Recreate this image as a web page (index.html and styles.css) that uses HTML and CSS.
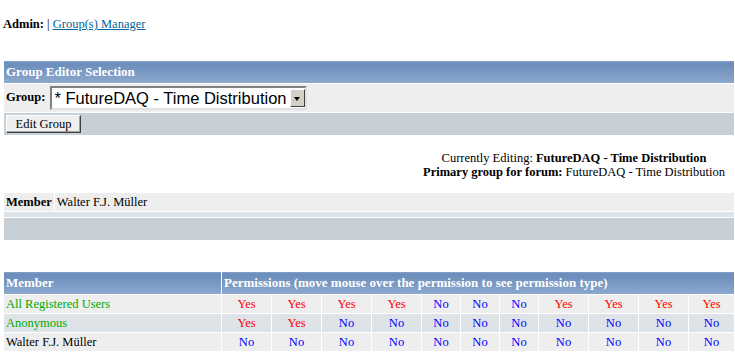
FILE: index.html
```html
<!DOCTYPE html>
<html lang="en">
<head>
  <meta charset="UTF-8"/>
  <title>Group(s) Manager</title>
  <link rel="stylesheet" href="styles.css">
</head>
<body>
  <div class="nav"><b>Admin:</b> | <a href="#">Group(s) Manager</a></div>

  <table class="grid editor">
    <tr><th class="head">Group Editor Selection</th></tr>
    <tr class="row1">
      <td class="pick">
        <b>Group:</b>
        <span class="select">
          <select>
            <option>* FutureDAQ - Time Distribution</option>
          </select>
          <span class="arrow"></span>
        </span>
      </td>
    </tr>
    <tr class="cat"><td class="actions"><button>Edit Group</button></td></tr>
  </table>

  <div class="current-wrap">
    <div class="current">
      Currently Editing: <b>FutureDAQ - Time Distribution</b><br>
      <b>Primary group for forum:</b> FutureDAQ - Time Distribution
    </div>
  </div>

  <table class="grid members">
    <tr class="row1">
      <td class="label"><b>Member</b></td>
      <td>Walter F.J. Müller</td>
    </tr>
    <tr class="row2 thin"><td colspan="2"></td></tr>
    <tr class="cat tall"><td colspan="2"></td></tr>
  </table>

  <table class="grid perms">
    <colgroup>
      <col class="c-member">
      <col class="c-yes"><col class="c-yes"><col class="c-yes"><col class="c-yes">
      <col class="c-no"><col class="c-no"><col class="c-no">
      <col class="c-yes"><col class="c-yes"><col class="c-yes"><col>
    </colgroup>
    <tr>
      <th class="head">Member</th>
      <th class="head" colspan="11">Permissions (move mouse over the permission to see permission type)</th>
    </tr>
    <tr class="row1">
      <td class="group">All Registered Users</td>
      <td class="yes">Yes</td><td class="yes">Yes</td><td class="yes">Yes</td><td class="yes">Yes</td>
      <td class="no">No</td><td class="no">No</td><td class="no">No</td>
      <td class="yes">Yes</td><td class="yes">Yes</td><td class="yes">Yes</td><td class="yes">Yes</td>
    </tr>
    <tr class="row2">
      <td class="group">Anonymous</td>
      <td class="yes">Yes</td><td class="yes">Yes</td><td class="no">No</td><td class="no">No</td>
      <td class="no">No</td><td class="no">No</td><td class="no">No</td>
      <td class="no">No</td><td class="no">No</td><td class="no">No</td><td class="no">No</td>
    </tr>
    <tr class="row1">
      <td>Walter F.J. Müller</td>
      <td class="no">No</td><td class="no">No</td><td class="no">No</td><td class="no">No</td>
      <td class="no">No</td><td class="no">No</td><td class="no">No</td>
      <td class="no">No</td><td class="no">No</td><td class="no">No</td><td class="no">No</td>
    </tr>
  </table>
</body>
</html>
```

FILE: styles.css
```css
html { overflow: hidden; }
body { margin: 0; padding: 0 0 0 3px; background: #fff; color: #000; font-family: "Liberation Serif", "Times New Roman", serif; font-size: 12.5px; }
a { color: #006699; }

.nav { padding-top: 17px; line-height: 14px; height: 43px; }

.grid { width: 732px; border-collapse: separate; border-spacing: 1px; }
.grid td, .grid th { padding: 0 2px; text-align: left; }
.head { height: 22px; color: #fff; font-weight: bold; font-size: 13px; background: linear-gradient(#86a2c8 0, #6a8dbb 2px, #7d9bc4 60%, #8ba8cd 100%); }
.row1 td { background: #eeeeee; }
.row2 td { background: #dee3e7; }
.cat td { background: #c7d0d7; }

.pick { height: 28px; }
.select { position: relative; display: inline-block; vertical-align: middle; margin-left: 1px; }
.select select { appearance: none; -webkit-appearance: none; width: 257px; height: 24px; margin: 0; padding: 0 0 0 3px; font-family: "Liberation Sans", Arial, sans-serif; font-size: 16.5px; color: #000; background: #fff; border: 2px solid; border-color: #808080 #e0e0e0 #e0e0e0 #808080; border-radius: 0; }
.arrow { position: absolute; right: 2px; top: 3px; width: 15px; height: 18px; background: #d4d0c8; border: 1px solid; border-color: #fff #404040 #404040 #fff; box-sizing: border-box; }
.arrow::after { content: ""; position: absolute; left: 3px; top: 7px; border-left: 3px solid transparent; border-right: 3px solid transparent; border-top: 4px solid #000; }

.actions { height: 22px; }
button { font-family: "Liberation Serif", "Times New Roman", serif; font-size: 12.5px; color: #000; background: #efefef; height: 18px; width: 75px; padding: 0; border: 1px solid; border-color: #fff #404040 #404040 #fff; box-shadow: inset -1px -1px 0 #a0a0a0; }

.current-wrap { display: flex; justify-content: flex-end; padding: 15px 10px 13px 0; }
.current { text-align: center; line-height: 14px; }

.members .row1 td { height: 18px; }
.members .label { width: 43px; }
.members .thin td { height: 5px; padding: 0; }
.members .tall td { height: 22px; }

.perms { margin-top: 30px; table-layout: fixed; }
.perms td { height: 18px; }
.c-member { width: 217px; }
.c-yes { width: 49px; }
.c-no { width: 38px; }
.perms .yes, .perms .no { text-align: center; }
.yes { color: #ff0000; }
.no { color: #0000ff; }
.group { color: #00aa00; }
```
